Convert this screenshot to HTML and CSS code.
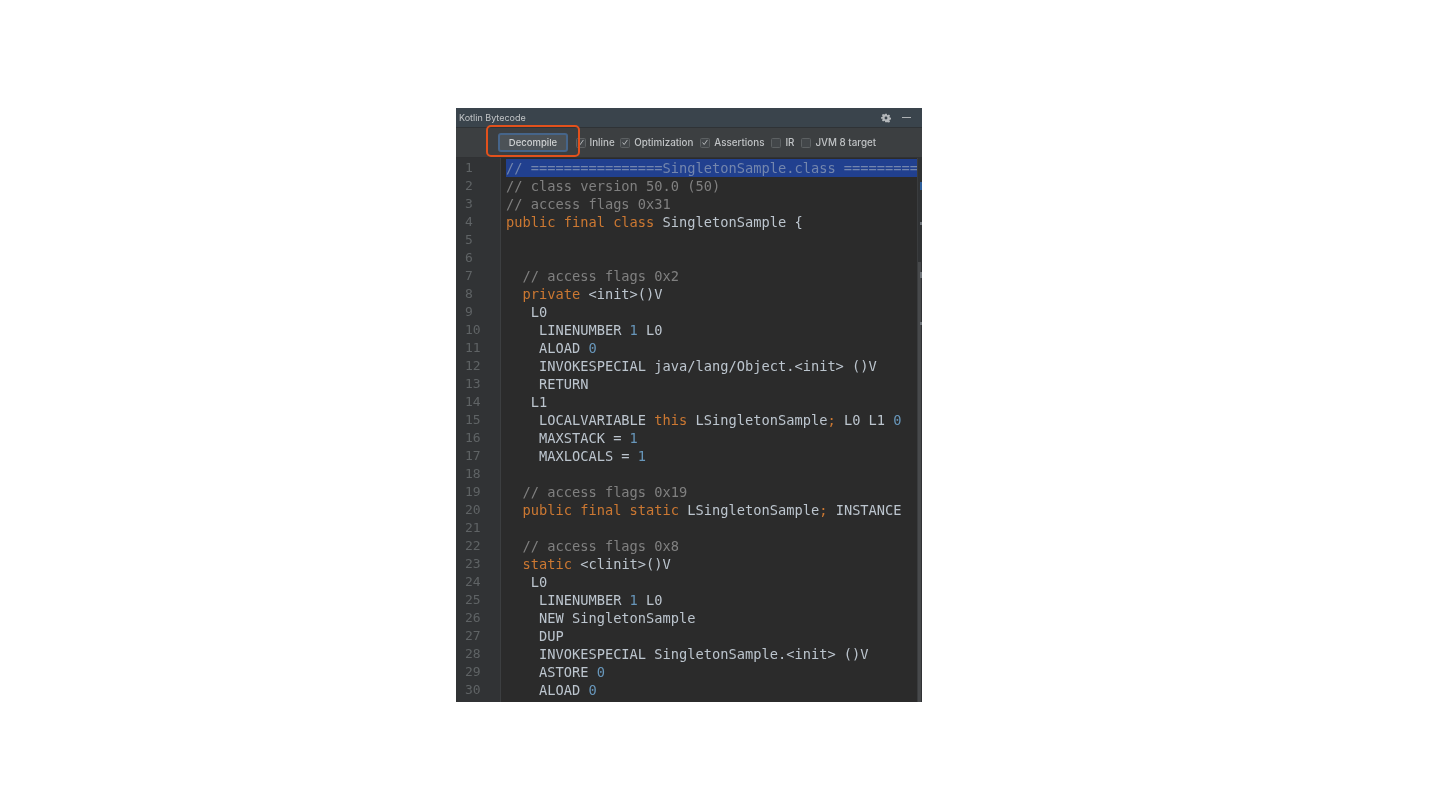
FILE: index.html
```html
<!DOCTYPE html>
<html lang="en">
<head>
<meta charset="utf-8">
<title>Kotlin Bytecode</title>
<link rel="stylesheet" href="styles.css">
</head>
<body>
<main class="panel">
  <header class="titlebar">
    <span class="title">Kotlin Bytecode</span>
    <div class="title-actions">
      <svg class="gear" viewBox="0 0 12 12" width="12" height="12" aria-hidden="true"><path fill="#b4b8bb" fill-rule="evenodd" d="M5 .8h2l.3 1.500.9.4 1.300-.8 1.400 1.400-.8 1.300.4.9 1.500.3v2l-1.500.3-.4.9.8 1.300-1.400 1.400-1.300-.8-.9.4L7 11.200H5l-.3-1.500-.9-.4-1.300.8L1.100 8.700l.8-1.300-.4-.9L0 7V5l1.500-.3.4-.9-.8-1.300L2.500 1.100l1.300.8.9-.4zM6 4.300a1.700 1.700 0 1 0 0 3.400 1.700 1.700 0 0 0 0-3.400z"/></svg>
      <span class="minimize"></span>
    </div>
  </header>
  <div class="toolbar">
    <button class="decompile">Decompile</button>
    <label class="option option-first"><span class="check on"><svg viewBox="0 0 10 10" width="10" height="10"><path d="M2 5l2 2.500L8 1.800" fill="none" stroke="#b9bcbe" stroke-width="1.200"/></svg></span>Inline</label>
    <label class="option option-tight"><span class="check on"><svg viewBox="0 0 10 10" width="10" height="10"><path d="M2 5l2 2.500L8 1.800" fill="none" stroke="#b9bcbe" stroke-width="1.200"/></svg></span>Optimization</label>
    <label class="option"><span class="check on"><svg viewBox="0 0 10 10" width="10" height="10"><path d="M2 5l2 2.500L8 1.800" fill="none" stroke="#b9bcbe" stroke-width="1.200"/></svg></span>Assertions</label>
    <label class="option"><span class="check"></span>IR</label>
    <label class="option"><span class="check"></span>JVM 8 target</label>
    <span class="highlight"></span>
  </div>
  <div class="body">
    <div class="editor">
      <div class="row"><span class="num">1</span><code class="code selected">// ================SingletonSample.class =========</code></div>
      <div class="row"><span class="num">2</span><code class="code c">// class version 50.0 (50)</code></div>
      <div class="row"><span class="num">3</span><code class="code c">// access flags 0x31</code></div>
      <div class="row"><span class="num">4</span><code class="code"><b>public final class</b> SingletonSample {</code></div>
      <div class="row"><span class="num">5</span><code class="code"></code></div>
      <div class="row"><span class="num">6</span><code class="code"></code></div>
      <div class="row"><span class="num">7</span><code class="code c">  // access flags 0x2</code></div>
      <div class="row"><span class="num">8</span><code class="code">  <b>private</b> &lt;init&gt;()V</code></div>
      <div class="row"><span class="num">9</span><code class="code">   L0</code></div>
      <div class="row"><span class="num">10</span><code class="code">    LINENUMBER <i>1</i> L0</code></div>
      <div class="row"><span class="num">11</span><code class="code">    ALOAD <i>0</i></code></div>
      <div class="row"><span class="num">12</span><code class="code">    INVOKESPECIAL java/lang/Object.&lt;init&gt; ()V</code></div>
      <div class="row"><span class="num">13</span><code class="code">    RETURN</code></div>
      <div class="row"><span class="num">14</span><code class="code">   L1</code></div>
      <div class="row"><span class="num">15</span><code class="code">    LOCALVARIABLE <b>this</b> LSingletonSample<b>;</b> L0 L1 <i>0</i></code></div>
      <div class="row"><span class="num">16</span><code class="code">    MAXSTACK = <i>1</i></code></div>
      <div class="row"><span class="num">17</span><code class="code">    MAXLOCALS = <i>1</i></code></div>
      <div class="row"><span class="num">18</span><code class="code"></code></div>
      <div class="row"><span class="num">19</span><code class="code c">  // access flags 0x19</code></div>
      <div class="row"><span class="num">20</span><code class="code">  <b>public final static</b> LSingletonSample<b>;</b> INSTANCE</code></div>
      <div class="row"><span class="num">21</span><code class="code"></code></div>
      <div class="row"><span class="num">22</span><code class="code c">  // access flags 0x8</code></div>
      <div class="row"><span class="num">23</span><code class="code">  <b>static</b> &lt;clinit&gt;()V</code></div>
      <div class="row"><span class="num">24</span><code class="code">   L0</code></div>
      <div class="row"><span class="num">25</span><code class="code">    LINENUMBER <i>1</i> L0</code></div>
      <div class="row"><span class="num">26</span><code class="code">    NEW SingletonSample</code></div>
      <div class="row"><span class="num">27</span><code class="code">    DUP</code></div>
      <div class="row"><span class="num">28</span><code class="code">    INVOKESPECIAL SingletonSample.&lt;init&gt; ()V</code></div>
      <div class="row"><span class="num">29</span><code class="code">    ASTORE <i>0</i></code></div>
      <div class="row"><span class="num">30</span><code class="code">    ALOAD <i>0</i></code></div>
    </div>
    <div class="strip">
      <span class="thumb"></span>
      <span class="mark mark-blue"></span>
      <span class="mark mark-a"></span>
      <span class="mark mark-b"></span>
      <span class="mark mark-c"></span>
    </div>
  </div>
</main>
</body>
</html>
```
FILE: styles.css
```css
* { box-sizing: border-box; }
html, body { margin: 0; background: #fff; }
body { height: 810px; padding: 108px 0 0 456px; overflow: hidden; }
.panel { width: 466px; height: 594px; background: #2b2b2b; display: flex; flex-direction: column; overflow: hidden; font-family: "Inter", "Liberation Sans", sans-serif; color: #bbbdbf; filter: blur(0.45px); }
.titlebar { height: 20px; flex: none; background: #3a444c; border-bottom: 1px solid #2f3336; display: flex; align-items: center; justify-content: space-between; padding: 0 11px 0 3px; }
.title { font-size: 9px; color: #c2c5c7; }
.title-actions { display: flex; align-items: center; gap: 11px; }
.gear { width: 10px; height: 10px; display: block; }
.minimize { width: 9px; height: 1.500px; background: #aeb2b5; display: block; }
.toolbar { position: relative; height: 30px; flex: none; background: #3c3f41; display: flex; align-items: center; padding-left: 42px; font-size: 9.800px; font-weight: 500; border-bottom: 1px solid #303234; }
.decompile { width: 70px; height: 19px; padding: 0; background: #4c5257; border: 2px solid #46658a; border-radius: 3px; color: #cfd1d2; font: inherit; font-size: 9.500px; }
.option { display: flex; align-items: center; gap: 4px; margin-left: 7px; color: #c0c3c5; white-space: nowrap; }
.option-first { margin-left: 7.500px; }
.option-tight { margin-left: 5.500px; }
.check { width: 10px; height: 10px; border: 1px solid #5d6163; background: #43474a; border-radius: 1.500px; display: flex; align-items: center; justify-content: center; flex: none; }
.check svg { display: block; width: 9px; height: 9px; }
.highlight { position: absolute; left: 30px; top: -3px; width: 94px; height: 32px; border: 2px solid #e2511c; border-radius: 5px; }
.body { flex: 1; display: flex; min-height: 0; }
.editor { width: 461px; flex: none; overflow: hidden; background: linear-gradient(to right, #313335 44px, #3c3e40 44px, #3c3e40 45px, #2b2b2b 45px); padding-top: 1px; }
.row { height: 18px; display: flex; font-family: "DejaVu Sans Mono", "Liberation Mono", monospace; font-size: 13.700px; line-height: 18px; }
.num { width: 50px; flex: none; padding-left: 9px; color: #5f6365; font-size: 13px; }
.code { flex: 1; min-width: 0; white-space: pre; overflow: hidden; color: #bcc5ce; font-family: inherit; font-size: inherit; }
.code b { font-weight: 400; color: #cc7832; }
.code i { font-style: normal; color: #6897bb; }
.c { color: #808080; }
.selected { background: #21408f; color: #7486ad; }
.strip { flex: 1; position: relative; background: #303234; border-left: 1px solid #3a3c3e; }
.thumb { position: absolute; left: 0; top: 104px; width: 3px; height: 440px; background: #47494b; }
.mark { position: absolute; right: 0; width: 2px; height: 3px; background: #70757a; }
.mark-blue { top: 24px; height: 8px; background: #2f5f9a; }
.mark-a { top: 64px; }
.mark-b { top: 114px; height: 6px; }
.mark-c { top: 164px; }
```
